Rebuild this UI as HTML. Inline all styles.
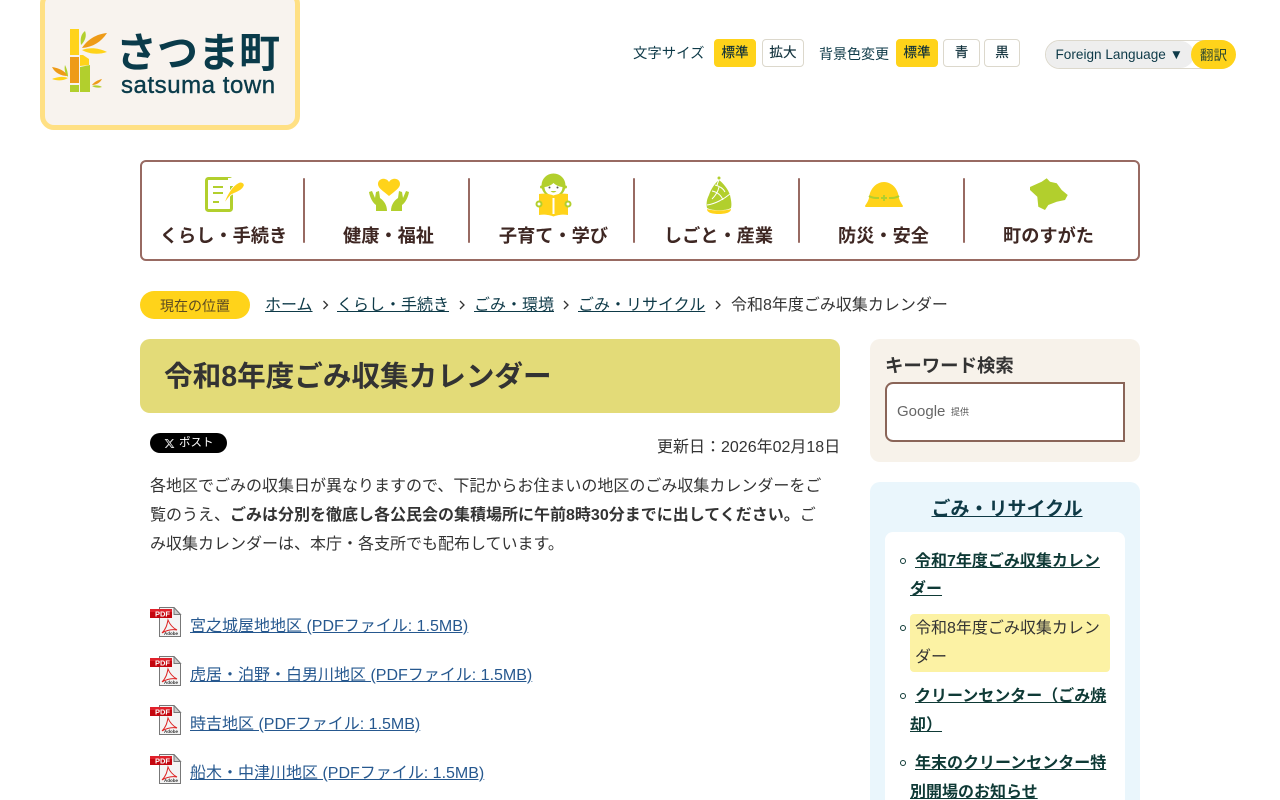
<!DOCTYPE html>
<html lang="ja"><head><meta charset="utf-8"><title>令和8年度ごみ収集カレンダー</title>
<style>
*{box-sizing:border-box}
html,body{margin:0;padding:0;background:#fff;width:1280px;height:800px;overflow:hidden}
body{font-family:"Liberation Sans","Noto Sans CJK JP",sans-serif;color:#333;position:relative;font-size:16px}
.a{position:absolute;white-space:nowrap}
.btn{position:absolute;top:39px;height:28px;border-radius:4px;border:1px solid #dcd8cc;background:#fff;font-size:13.6px;line-height:26px;text-align:center;color:#0e2f3a;-webkit-text-stroke:.15px #0e2f3a}
.btn.on{background:#ffd31a;border-color:#ffd31a}
.sep{position:absolute;top:178px;width:2px;height:65px;background:#986a62;border-radius:1px}
.nl{position:absolute;top:223px;width:165px;text-align:center;font-size:18.2px;font-weight:bold;line-height:26px;color:#3e2723;white-space:nowrap}
.bc{color:#0e3a48;text-decoration:underline}
.pdf{position:absolute;left:150px;width:32px;height:32px}
.pl{position:absolute;left:190px;color:#26588f;text-decoration:underline;line-height:24px;white-space:nowrap}
.sl{position:absolute;font-weight:bold;color:#0f3a36;text-decoration:underline;white-space:nowrap;line-height:29px}
.dot{position:absolute;left:900px;width:6px;height:6px;border:1px solid #0f3a36;border-radius:50%}
</style></head><body>

<div class="a" style="left:40px;top:-10px;width:260px;height:140px;background:#f8f3ee;border:5px solid #ffe084;border-radius:14px"></div>
<svg class="a" style="left:50px;top:28px" width="60" height="66" viewBox="0 0 60 66">
<rect x="20" y="1" width="9" height="26" fill="#ffd31a"/>
<rect x="20" y="29" width="9" height="26" fill="#ee9b18"/>
<rect x="20" y="57" width="9" height="7" fill="#b2cf2d"/>
<path d="M30 27h3l6 4v6l-9 1z" fill="#ffd31a"/>
<path d="M30 39l10-2v27h-10z" fill="#b2cf2d"/>
<path d="M32 20c5-8 14-14 25-15c-6 9-14 14-25 15z" fill="#ee9b18"/>
<path d="M32 22c8-3 17-2 25 2c-9 3-18 2-25-2z" fill="#ffd31a"/>
<path d="M31 17c-1-6 0-11 4-14c2 5 0 10-4 14z" fill="#b2cf2d"/>
<path d="M2 39c7 1 13 4 16 9c-7 0-13-3-16-9z" fill="#ee9b18"/>
<path d="M2 51c5-2 11-3 16-1c-5 3-11 3-16 1z" fill="#ffd31a"/>
<path d="M18 49c-3-3-4-8-3-12c2 4 3 8 3 12z" fill="#b2cf2d"/>
<path d="M42 57c2-3 6-5 10-6c-2 4-6 6-10 6z" fill="#ee9b18"/>
<path d="M42 58c3-1 7-1 10 1c-3 1-7 1-10-1z" fill="#b2cf2d"/>
</svg>
<div class="a" style="left:116px;top:24px;font-size:41px;line-height:50px;font-weight:bold;color:#0a3b4a;font-family:'Noto Sans CJK JP',sans-serif">さつま町</div>
<div class="a" style="left:121px;top:71px;font-size:24px;line-height:30px;color:#0a3b4a;letter-spacing:.55px;-webkit-text-stroke:.4px #0a3b4a">satsuma town</div>

<div class="a" style="left:633px;top:43px;font-size:14.4px;line-height:22px;color:#0e3a48">文字サイズ</div>
<div class="btn on" style="left:714px;width:42px">標準</div>
<div class="btn" style="left:762px;width:42px">拡大</div>
<div class="a" style="left:819px;top:43px;font-size:14px;line-height:22px;color:#0e3a48">背景色変更</div>
<div class="btn on" style="left:896px;width:42px">標準</div>
<div class="btn" style="left:943px;width:37px">青</div>
<div class="btn" style="left:984px;width:36px">黒</div>
<div class="a" style="left:1045px;top:40px;width:190px;height:29px;border:1px solid #dcd8cc;border-radius:15px;background:#fff"></div>
<div class="a" style="left:1046px;top:41px;width:148px;height:27px;border-radius:14px;background:#eeeeee"></div>
<div class="a" style="left:1055.500px;top:46px;font-size:13.6px;line-height:18px;color:#0e3a48">Foreign Language ▼</div>
<div class="a" style="left:1191px;top:40px;width:45px;height:29px;border-radius:15px;background:#ffd31a;font-size:13.6px;line-height:31px;text-align:center;color:#2f4a30">翻訳</div>

<div class="a" style="left:140px;top:160px;width:1000px;height:101px;border:2px solid #986a62;border-radius:6px"></div>
<div class="sep" style="left:303px"></div><div class="sep" style="left:468px"></div><div class="sep" style="left:633px"></div><div class="sep" style="left:798px"></div><div class="sep" style="left:963px"></div>
<div class="nl" style="left:141px">くらし・手続き</div>
<div class="nl" style="left:306px">健康・福祉</div>
<div class="nl" style="left:471px">子育て・学び</div>
<div class="nl" style="left:636px">しごと・産業</div>
<div class="nl" style="left:801px">防災・安全</div>
<div class="nl" style="left:966px">町のすがた</div>

<svg class="a" style="left:200px;top:174px" width="48" height="42" viewBox="0 0 48 42">
<rect x="6.500" y="4.500" width="25" height="32" rx="2" fill="none" stroke="#b2cf2d" stroke-width="3"/>
<path d="M13 13h10M13 19h10M13 28h6" stroke="#b2cf2d" stroke-width="2"/>
<path d="M28 4h7v8h-7z" fill="#fff"/>
<path d="M24 30C26 22 32 12 38 9C41 7 45 9 44 12C42 17 36 18 31 21C29 23 26 27 24 30z" fill="#ffd31a" stroke="#fff" stroke-width=".8"/>
</svg>
<svg class="a" style="left:368px;top:177px" width="42" height="36" viewBox="0 0 42 36">
<path d="M21 19C15 14 10 11 10 7c0-6 8-7 11-2c3-5 11-4 11 2c0 4-5 7-11 12z" fill="#ffd31a"/>
<path d="M1 15l3-1l3 7l1-6l3-1l1 7C15 23 19 27 19 34H8V28C5 26 2 21 1 15z" fill="#b2cf2d"/>
<path d="M41 15l-3-1l-3 7l-1-6l-3-1l-1 7C27 23 23 27 23 34H34V28C37 26 40 21 41 15z" fill="#b2cf2d"/>
</svg>
<svg class="a" style="left:534px;top:173px" width="40" height="44" viewBox="0 0 40 44">
<circle cx="19.500" cy="12.500" r="12" fill="#b2cf2d"/><circle cx="7.500" cy="14" r="1.500" fill="#b2cf2d"/><circle cx="31.500" cy="14" r="1.500" fill="#b2cf2d"/>
<path d="M10.500 14c3 0 7-2 9-4c2 2 6 4 9 4c0 5-4 8.500-9 8.500s-9-3.500-9-8.500z" fill="#fff"/>
<circle cx="15.500" cy="14.500" r="1" fill="#555"/><circle cx="23.500" cy="14.500" r="1" fill="#555"/><path d="M16.500 18c2 2 4 2 6 0z" fill="#b2cf2d"/>
<path d="M5 21c5-1 11 0 14.500 1.500C23 21 29 20 34 21v21c-5-1-11 0-14.500 1.500C16 42 10 41 5 42z" fill="#ffd31a"/>
<rect x="18.500" y="25" width="2" height="16" fill="#fff"/>
<circle cx="5" cy="31" r="2.500" fill="#fff" stroke="#b2cf2d" stroke-width="2"/><circle cx="34" cy="31" r="2.500" fill="#fff" stroke="#b2cf2d" stroke-width="2"/>
</svg>
<svg class="a" style="left:704px;top:175px" width="30" height="40" viewBox="0 0 30 40">
<circle cx="15" cy="3" r="1.500" fill="#b2cf2d"/>
<path d="M15 5C19 8 24 14 26 20C27 25 28 29 27 33C22 36 8 36 3 33C2 28 3 24 5 20C7 14 11 8 15 5z" fill="#b2cf2d"/>
<path d="M3 30C11 29 20 24 26 19M8 16C13 17 17 20 19 25M11 10C15 11 19 13 21 17M8 24C11 21 14 17 15 12M15 5C14 7 13 9 13 11" stroke="#fff" fill="none"/>
<path d="M3 34C8 36 22 36 27 34C27 38 20 39 15 39C9 39 3 38 3 34z" fill="#ffd31a"/>
</svg>
<svg class="a" style="left:864px;top:180px" width="40" height="28" viewBox="0 0 40 28">
<path d="M5 18C6 8 13 2 20 2S34 8 35 18C36 22 38 24 39 26C39 27 38 27 37 27H3C2 27 1 27 1 26C2 24 4 22 5 18z" fill="#ffd31a"/>
<path d="M5 16C8 18 11 18 15 18M25 18C29 18 32 18 35 16M17 18h6M20 15v6" stroke="#b2cf2d" stroke-width="2" fill="none"/>
</svg>
<svg class="a" style="left:1028px;top:176px" width="42" height="36" viewBox="0 0 42 36">
<path d="M2 11L10.300 7.300L13.700 5.700L18.700 2.300L22 5.700L28.700 7.300L33.700 14L39.700 19L37 24L28.700 25.700L20.300 29L17 34L10.300 30.700L9.300 20.700L2 14z" fill="#b2cf2d"/>
</svg>

<div class="a" style="left:140px;top:291px;width:110px;height:28px;border-radius:14px;background:#ffd31a;text-align:center;font-size:14px;line-height:30px;color:#5b4a22">現在の位置</div>
<div class="a" style="left:265px;top:295px;font-size:16px;line-height:22px;color:#333"><span class="bc">ホーム</span></div>
<div class="a" style="left:337px;top:295px;font-size:16px;line-height:22px"><span class="bc">くらし・手続き</span></div>
<div class="a" style="left:474px;top:295px;font-size:16px;line-height:22px"><span class="bc">ごみ・環境</span></div>
<div class="a" style="left:578px;top:295px;font-size:16px;line-height:22px"><span class="bc">ごみ・リサイクル</span></div>
<div class="a" style="left:731px;top:295px;font-size:16px;line-height:22px;color:#333">令和8年度ごみ収集カレンダー</div>
<svg class="a" style="left:0;top:0" width="1280" height="320"><g fill="none" stroke="#333" stroke-width="1.300"><path d="M323.500 301l4 4l-4 4M460 301l4 4l-4 4M564 301l4 4l-4 4M716 301l4 4l-4 4"/></g></svg>

<div class="a" style="left:140px;top:339px;width:700px;height:74px;border-radius:10px;background:#e3db78"></div>
<div class="a" style="left:164px;top:357px;font-size:28.6px;line-height:40px;font-weight:bold;color:#333">令和8年度ごみ収集カレンダー</div>

<div class="a" style="left:150px;top:433px;width:77px;height:20px;border-radius:10px;background:#000"></div>
<svg class="a" style="left:164px;top:438px" width="11" height="11" viewBox="0 0 24 24"><path d="M18.244 2.250h3.308l-7.227 8.260 8.502 11.240H16.170l-5.214-6.817L4.990 21.750H1.680l7.730-8.835L1.254 2.250H8.080l4.713 6.231zm-1.161 17.520h1.833L7.084 4.126H5.117z" fill="#ddd"/></svg>
<div class="a" style="left:179px;top:433px;color:#fff;font-size:11.5px;line-height:20px">ポスト</div>
<div class="a" style="left:657px;top:437px;font-size:16px;line-height:22px;color:#333">更新日：2026年02月18日</div>

<div class="a" style="left:150px;top:472px;width:680px;font-size:16px;line-height:29px;color:#333">各地区でごみの収集日が異なりますので、下記からお住まいの地区のごみ収集カレンダーをご<br>覧のうえ、<b>ごみは分別を徹底し各公民会の集積場所に午前8時30分までに出してください。</b>ご<br>み収集カレンダーは、本庁・各支所でも配布しています。</div>

<svg width="0" height="0" style="position:absolute"><defs>
<g id="p"><path d="M9.500 .5H24l6.500 7v22h-21z" fill="#f4f4f4" stroke="#777"/><path d="M24 .5v7h6.500z" fill="#ccc" stroke="#777"/>
<path d="M18 13c-1 5-2 9-6 13c5-3 10-4 15-3c-4-2-7-5-9-10z" fill="none" stroke="#d22" stroke-width="1"/>
<rect x="0" y="2" width="22" height="9" fill="#c4060f"/><rect x="0" y="2" width="22" height="3" fill="#e0212b"/></g></defs></svg>
<svg class="pdf" style="top:607px" viewBox="0 0 32 32"><use href="#p"/><text x="5" y="9.500" font-size="7.500" font-weight="bold" fill="#fff" font-family="Liberation Sans">PDF</text><text x="14" y="28" font-size="4.500" font-weight="bold" fill="#333" font-family="Liberation Sans">Adobe</text></svg>
<svg class="pdf" style="top:656px" viewBox="0 0 32 32"><use href="#p"/><text x="5" y="9.500" font-size="7.500" font-weight="bold" fill="#fff" font-family="Liberation Sans">PDF</text><text x="14" y="28" font-size="4.500" font-weight="bold" fill="#333" font-family="Liberation Sans">Adobe</text></svg>
<svg class="pdf" style="top:705px" viewBox="0 0 32 32"><use href="#p"/><text x="5" y="9.500" font-size="7.500" font-weight="bold" fill="#fff" font-family="Liberation Sans">PDF</text><text x="14" y="28" font-size="4.500" font-weight="bold" fill="#333" font-family="Liberation Sans">Adobe</text></svg>
<svg class="pdf" style="top:754px" viewBox="0 0 32 32"><use href="#p"/><text x="5" y="9.500" font-size="7.500" font-weight="bold" fill="#fff" font-family="Liberation Sans">PDF</text><text x="14" y="28" font-size="4.500" font-weight="bold" fill="#333" font-family="Liberation Sans">Adobe</text></svg>
<div class="pl" style="top:615px">宮之城屋地地区 (PDFファイル: 1.5MB)</div>
<div class="pl" style="top:664px">虎居・泊野・白男川地区 (PDFファイル: 1.5MB)</div>
<div class="pl" style="top:713px">時吉地区 (PDFファイル: 1.5MB)</div>
<div class="pl" style="top:762px">船木・中津川地区 (PDFファイル: 1.5MB)</div>

<div class="a" style="left:870px;top:339px;width:270px;height:123px;border-radius:10px;background:#f7f2ea"></div>
<div class="a" style="left:885px;top:354px;font-size:18.4px;line-height:24px;font-weight:bold;color:#333">キーワード検索</div>
<div class="a" style="left:885px;top:382px;width:240px;height:60px;background:#fff;border:2px solid #8a6558;border-radius:8px 0 0 8px"></div>
<div class="a" style="left:897px;top:402px;font-size:15px;line-height:20px;color:#666">Google</div>
<div class="a" style="left:951px;top:405px;font-size:9px;line-height:14px;color:#555">提供</div>

<div class="a" style="left:870px;top:482px;width:270px;height:340px;border-radius:10px;background:#eaf6fc"></div>
<div class="a" style="left:872px;top:497px;width:270px;text-align:center;font-size:19px;line-height:26px;font-weight:bold;color:#0f3a46;text-decoration:underline">ごみ・リサイクル</div>
<div class="a" style="left:885px;top:532px;width:240px;height:300px;border-radius:8px;background:#fff"></div>
<div class="dot" style="top:558px"></div><div class="dot" style="top:625px"></div><div class="dot" style="top:693px"></div><div class="dot" style="top:760px"></div>
<div class="sl" style="left:915px;top:547px">令和7年度ごみ収集カレン</div>
<div class="sl" style="left:910px;top:575px">ダー</div>
<div class="a" style="left:910px;top:614px;width:200px;height:58px;border-radius:4px;background:#fcf2a4"></div>
<div class="a" style="left:915px;top:614px;font-size:16px;line-height:29px;color:#333">令和8年度ごみ収集カレン</div>
<div class="a" style="left:915px;top:643px;font-size:16px;line-height:29px;color:#333">ダー</div>
<div class="sl" style="left:915px;top:682px">クリーンセンター（ごみ焼</div>
<div class="sl" style="left:910px;top:711px">却）</div>
<div class="sl" style="left:915px;top:749px">年末のクリーンセンター特</div>
<div class="sl" style="left:910px;top:778px">別開場のお知らせ</div>
</body></html>
